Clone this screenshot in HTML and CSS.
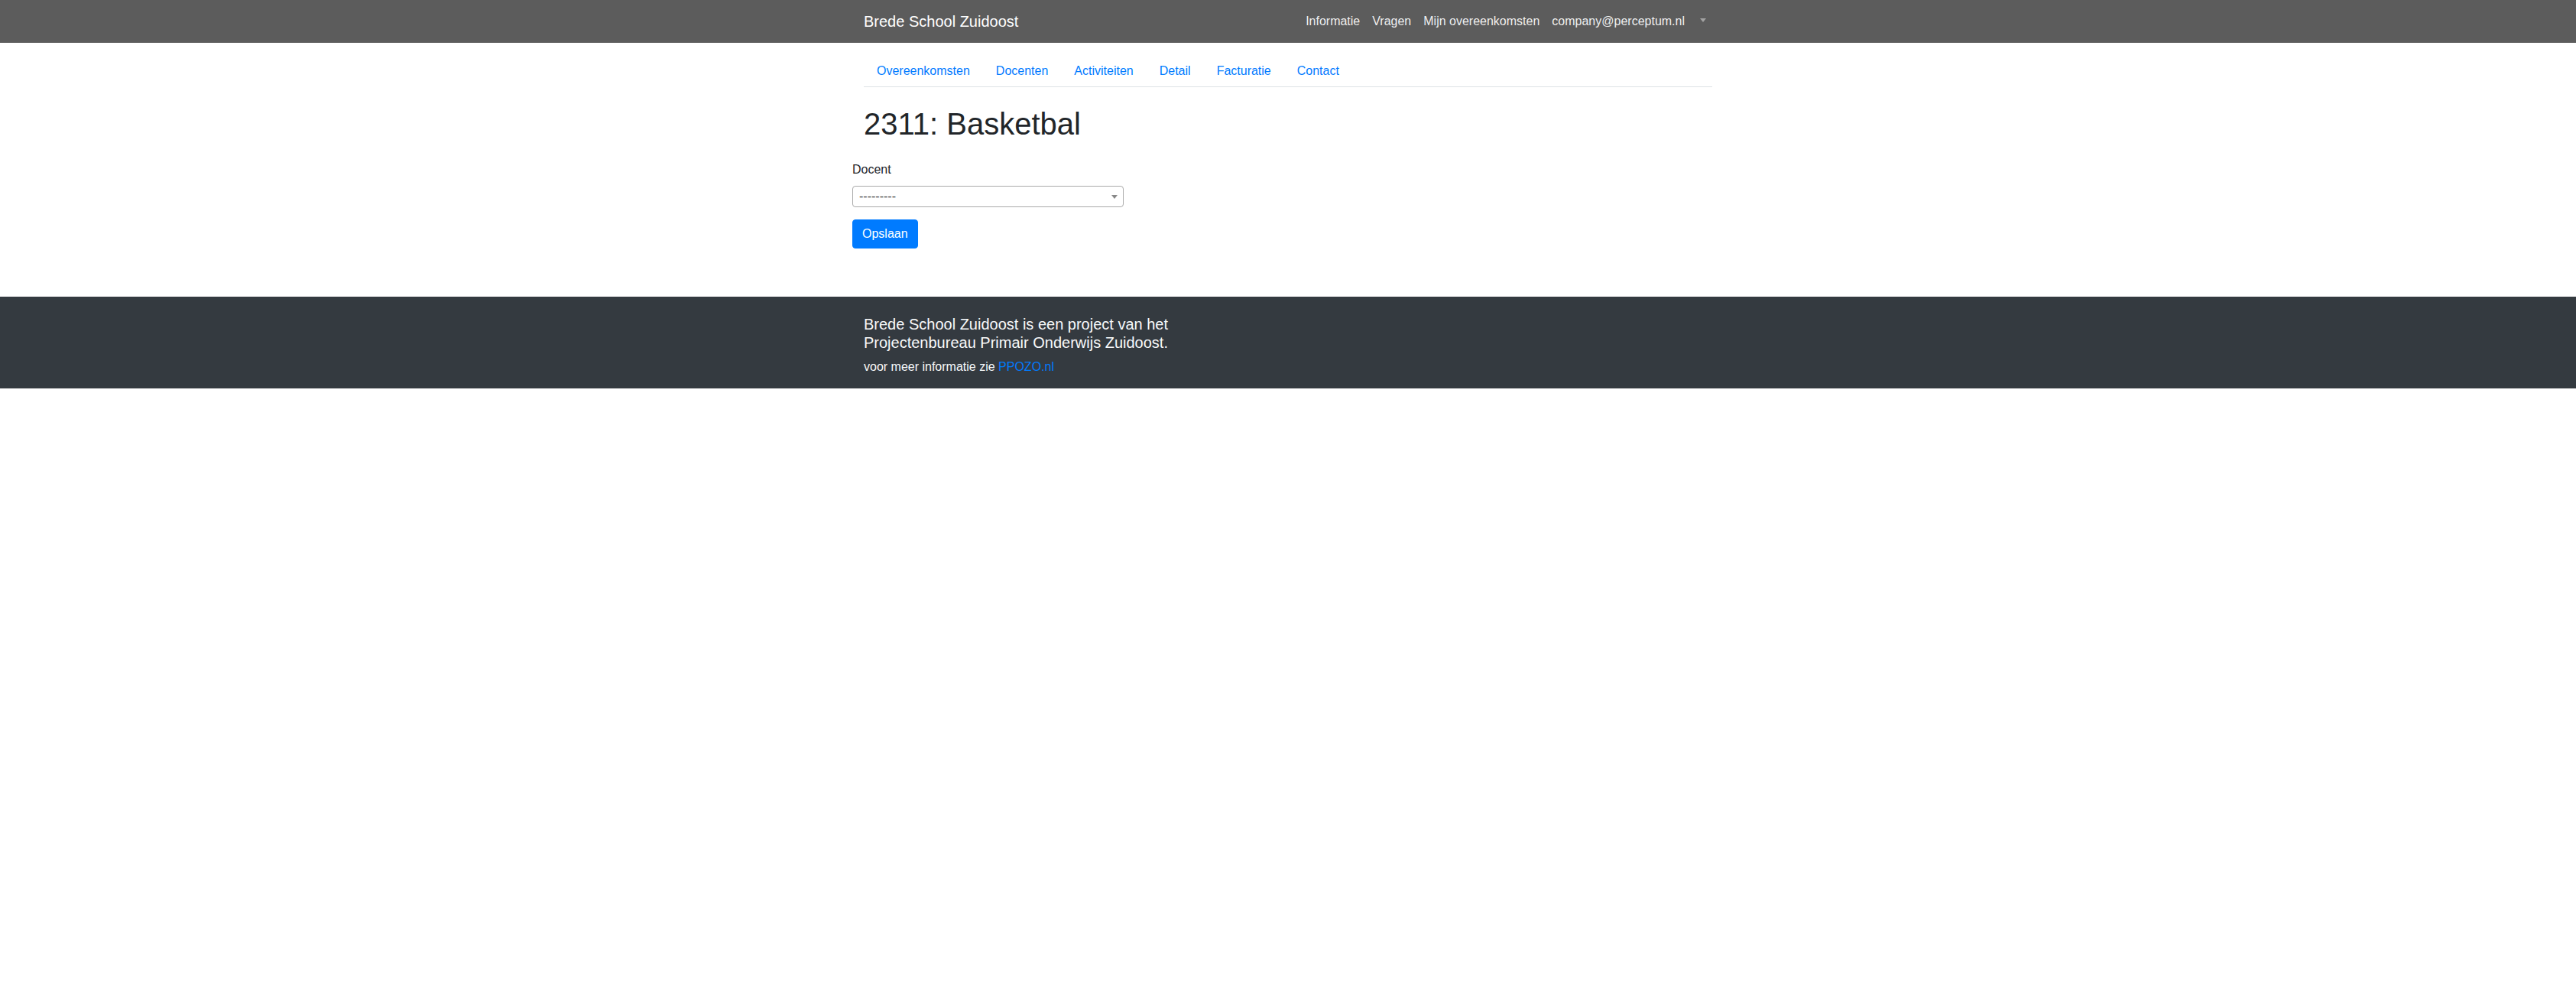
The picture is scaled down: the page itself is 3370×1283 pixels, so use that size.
FILE: index.html
```html
<!DOCTYPE html>
<html lang="nl">
<head>
<meta charset="utf-8">
<title>2311: Basketbal - Brede School Zuidoost</title>
<link rel="stylesheet" href="styles.css">
</head>
<body>
<header class="navbar">
  <div class="container navbar-inner">
    <a class="brand" href="#">Brede School Zuidoost</a>
    <ul class="navbar-nav">
      <li><a class="nav-link" href="#">Informatie</a></li>
      <li><a class="nav-link" href="#">Vragen</a></li>
      <li><a class="nav-link" href="#">Mijn overeenkomsten</a></li>
      <li><a class="nav-link" href="#">company@perceptum.nl</a></li>
      <li><a class="nav-link dropdown-toggle" href="#"></a></li>
    </ul>
  </div>
</header>

<main class="container main">
  <ul class="nav-tabs">
    <li><a class="tab-link" href="#">Overeenkomsten</a></li>
    <li><a class="tab-link" href="#">Docenten</a></li>
    <li><a class="tab-link" href="#">Activiteiten</a></li>
    <li><a class="tab-link" href="#">Detail</a></li>
    <li><a class="tab-link" href="#">Facturatie</a></li>
    <li><a class="tab-link" href="#">Contact</a></li>
  </ul>

  <h1 class="title">2311: Basketbal</h1>

  <form class="form">
    <div class="form-group">
      <label class="label" for="docent">Docent</label>
      <span class="select2">
        <span class="select2-selection">
          <span class="select2-rendered">---------</span>
          <span class="select2-arrow"><b></b></span>
        </span>
      </span>
    </div>
    <button type="button" class="btn">Opslaan</button>
  </form>
</main>

<footer class="footer">
  <div class="container">
    <div class="footer-col">
      <h5 class="footer-title">Brede School Zuidoost is een project van het Projectenbureau Primair Onderwijs Zuidoost.</h5>
      <p class="footer-text">voor meer informatie zie <a class="footer-link" href="#">PPOZO.nl</a></p>
    </div>
  </div>
</footer>
</body>
</html>
```

FILE: styles.css
```css
* {
  box-sizing: border-box;
}

body {
  margin: 0;
  font-family: "Liberation Sans", Arial, sans-serif;
  font-size: 16px;
  line-height: 1.5;
  color: #212529;
  background: #fff;
}

a {
  text-decoration: none;
}

.container {
  width: 1140px;
  margin: 0 auto;
  padding: 0 15px;
}

/* Navbar */
.navbar {
  background: #5c5c5c;
  padding: 8px 0;
}

.navbar-inner {
  display: flex;
  align-items: center;
  justify-content: space-between;
}

.brand {
  color: #fff;
  font-size: 20px;
  line-height: 30px;
  padding: 5px 0;
}

.navbar-nav {
  display: flex;
  list-style: none;
  margin: 0;
  padding: 0;
}

.nav-link {
  display: block;
  padding: 8px;
  color: rgba(255, 255, 255, 0.92);
  line-height: 24px;
}

.dropdown-toggle::after {
  content: "";
  display: inline-block;
  margin-left: 4px;
  vertical-align: 4px;
  border-top: 5px solid #a3a3a3;
  border-left: 4px solid transparent;
  border-right: 4px solid transparent;
}

/* Main */
.main {
  padding-top: 16px;
}

.nav-tabs {
  display: flex;
  list-style: none;
  margin: 0;
  padding: 0;
  border-bottom: 1px solid #dee2e6;
}

.tab-link {
  display: block;
  padding: 8px 16px;
  border: 1px solid transparent;
  border-bottom: 0;
  color: #007bff;
  line-height: 24px;
}

.title {
  margin: 24px 0 8px;
  font-size: 40px;
  font-weight: 500;
  line-height: 1.2;
}

.form {
  margin: 0 -15px;
  padding-top: 16px;
}

.form-group {
  margin-bottom: 16px;
}

.label {
  display: block;
  margin-bottom: 9px;
}

.select2 {
  display: block;
  width: 355px;
}

.select2-selection {
  position: relative;
  display: block;
  height: 28px;
  border: 1px solid #aaa;
  border-radius: 4px;
  background: #fff;
}

.select2-rendered {
  display: block;
  padding: 0 20px 0 8px;
  color: #444;
  line-height: 26px;
}

.select2-arrow {
  position: absolute;
  top: 1px;
  right: 1px;
  width: 20px;
  height: 24px;
}

.select2-arrow b {
  position: absolute;
  top: 50%;
  left: 50%;
  margin-left: -4px;
  margin-top: -2px;
  border-top: 5px solid #888;
  border-left: 4px solid transparent;
  border-right: 4px solid transparent;
}

.btn {
  display: inline-block;
  padding: 6px 12px;
  font-family: inherit;
  font-size: 16px;
  line-height: 24px;
  color: #fff;
  background: #007bff;
  border: 1px solid #007bff;
  border-radius: 4px;
}

/* Footer */
.footer {
  margin-top: 63px;
  background: #343a40;
  color: #f8f9fa;
  padding: 24px 0 16px;
}

.footer-col {
  width: 540px;
}

.footer-title {
  margin: 0 0 8px;
  font-size: 20px;
  font-weight: 500;
  line-height: 1.2;
}

.footer-text {
  margin: 0;
}

.footer-link {
  color: #007bff;
}
```
